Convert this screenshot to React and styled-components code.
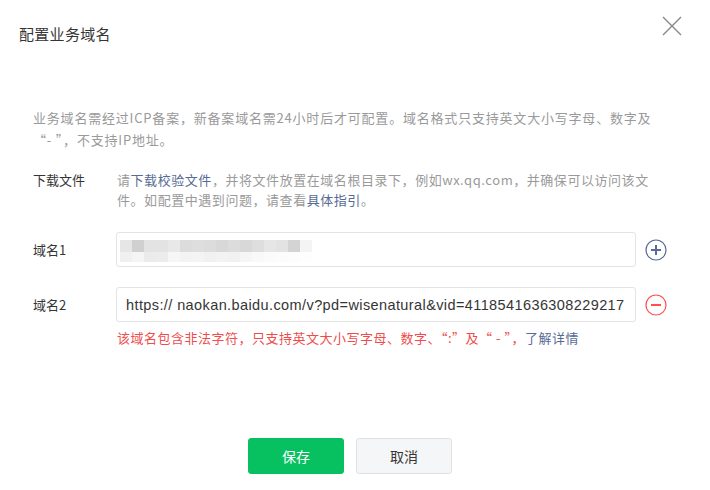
import React from "react";
import styled, { createGlobalStyle } from "styled-components";

const GlobalStyle = createGlobalStyle`
  html, body {
    margin: 0;
    padding: 0;
    background: #fff;
  }
  body {
    font-family: "Liberation Sans", "Noto Sans CJK SC", sans-serif;
    color: #353535;
  }
`;

const blurTop = ["#e6e6e6", "#d0d0d0", "#e3e3e3", "#e3e3e3", "#e8e8e8", "#dcdcdc", "#dedede", "#dcdcdc", "#d8d8d8", "#dcdcdc", "#d8d8d8", "#dedede", "#e6e6e6", "#e3e3e3", "#d4d4d4", "#f4f4f4"];
const blurBottom = ["#f0f0f0", "#f5f5f5", "#ebebeb", "#ececec", "#f6f6f6", "#f3f3f3", "#f4f4f4", "#f1f1f1", "#f3f3f3", "#f1f1f1", "#f6f6f6", "#f9f9f9", "#fbfbfb", "#fcfcfc", "#fdfdfd", "#fefefe"];

function App() {
    return (
        <Dialog>
            <GlobalStyle />
            <Header>
                <Title>配置业务域名</Title>
                <CloseButton aria-label="关闭">
                    <svg width="22" height="22" viewBox="0 0 22 22">
                        <path d="M2 2 L20 20 M20 2 L2 20" stroke="#888" strokeWidth="1.4" fill="none" />
                    </svg>
                </CloseButton>
            </Header>

            <Body>
                <Description>
                    业务域名需经过ICP备案，新备案域名需24小时后才可配置。域名格式只支持英文大小写字母、数字及<br />“- ”，不支持IP地址。
                </Description>

                <InfoRow>
                    <Label>下载文件</Label>
                    <InfoText>
                        请<Link>下载校验文件</Link>，并将文件放置在域名根目录下，例如wx.qq.com，并确保可以访问该文件。如配置中遇到问题，请查看<Link>具体指引</Link>。
                    </InfoText>
                </InfoRow>

                <FieldRow>
                    <Label>域名1</Label>
                    <InputBox>
                        <Blur>
                            <BlurLine>
                                {blurTop.map((c, i) => <BlurCell key={i} style={{ background: c }} />)}
                            </BlurLine>
                            <BlurLine $short>
                                {blurBottom.map((c, i) => <BlurCell key={i} style={{ background: c }} />)}
                            </BlurLine>
                        </Blur>
                    </InputBox>
                    <RoundIcon>
                        <svg width="22" height="22" viewBox="0 0 22 22">
                            <circle cx="11" cy="11" r="10" stroke="#576b95" strokeWidth="1.2" fill="none" />
                            <path d="M11 6 V16 M6 11 H16" stroke="#576b95" strokeWidth="2" />
                        </svg>
                    </RoundIcon>
                </FieldRow>

                <FieldRow $gap="20px">
                    <Label>域名2</Label>
                    <InputBox>
                        <InputText>https:// naokan.baidu.com/v?pd=wisenatural&amp;vid=4118541636308229217</InputText>
                    </InputBox>
                    <RoundIcon>
                        <svg width="22" height="22" viewBox="0 0 22 22">
                            <circle cx="11" cy="11" r="10" stroke="#fa5151" strokeWidth="1.2" fill="none" />
                            <path d="M6 11 H16" stroke="#fa5151" strokeWidth="2" />
                        </svg>
                    </RoundIcon>
                </FieldRow>
                <ErrorText>
                    该域名包含非法字符，只支持英文大小写字母、数字、“:”及“ - ”，<Link>了解详情</Link>
                </ErrorText>
            </Body>

            <Footer>
                <Button $primary>保存</Button>
                <Button>取消</Button>
            </Footer>
        </Dialog>
    );
}

export default App;

const Dialog = styled.div`
    width: 710px;
    height: 490px;
    background: #fff;
    position: relative;
    overflow: hidden;
`;

const Header = styled.div`
    display: flex;
    align-items: center;
    justify-content: space-between;
    height: 66px;
    padding: 0 27px 0 19px;
    box-sizing: border-box;
`;

const Title = styled.div`
    font-family: "Noto Sans CJK SC", sans-serif;
    font-size: 15px;
    color: #353535;
    line-height: 22px;
    letter-spacing: 0.3px;
    margin-top: 1px;
`;

const CloseButton = styled.button`
    border: none;
    background: transparent;
    padding: 0;
    width: 22px;
    height: 22px;
    margin-top: -14px;
    cursor: pointer;
    display: flex;
`;

const Body = styled.div`
    padding: 41px 0 0 33px;
`;

const Description = styled.div`
    width: 645px;
    font-family: "Noto Sans CJK SC", sans-serif;
    font-size: 13px;
    line-height: 22px;
    letter-spacing: 0.8px;
    color: #9a9a9a;
`;

const InfoRow = styled.div`
    display: flex;
    margin-top: 19px;
`;

const Label = styled.div`
    width: 84px;
    flex-shrink: 0;
    font-family: "Noto Sans CJK SC", sans-serif;
    font-size: 13px;
    line-height: 20px;
    color: #353535;
`;

const InfoText = styled.div`
    width: 545px;
    font-family: "Noto Sans CJK SC", sans-serif;
    font-size: 13px;
    line-height: 20px;
    letter-spacing: 0.55px;
    color: #9a9a9a;
`;

const Link = styled.span`
    color: #576b95;
    cursor: pointer;
`;

const FieldRow = styled.div`
    display: flex;
    align-items: center;
    margin-top: ${(props) => props.$gap || "22px"};
`;

const InputBox = styled.div`
    width: 520px;
    height: 35px;
    margin-left: -1px;
    border: 1px solid #e3e3e3;
    border-radius: 3px;
    box-sizing: border-box;
    display: flex;
    align-items: center;
    overflow: hidden;
    position: relative;
`;

const InputText = styled.span`
    padding-left: 9px;
    font-size: 14.5px;
    letter-spacing: 0.4px;
    color: #353535;
    white-space: nowrap;
`;

const Blur = styled.div`
    position: absolute;
    left: 3px;
    top: 7px;
    display: flex;
    flex-direction: column;
    filter: blur(0.6px);
`;

const BlurLine = styled.div`
    display: flex;
    height: ${(props) => (props.$short ? "10px" : "12px")};
`;

const BlurCell = styled.div`
    width: 12px;
    height: 100%;
`;

const RoundIcon = styled.div`
    margin-left: 9px;
    width: 22px;
    height: 22px;
    display: flex;
`;

const ErrorText = styled.div`
    margin: 6px 0 0 84px;
    font-family: "Noto Sans CJK SC", sans-serif;
    font-size: 13px;
    line-height: 20px;
    letter-spacing: 0.5px;
    color: #ef4d4d;
`;

const Footer = styled.div`
    position: absolute;
    left: 0;
    right: 10px;
    top: 438px;
    display: flex;
    justify-content: center;
    gap: 12px;
`;

const Button = styled.button`
    width: 96px;
    height: 36px;
    border-radius: 3px;
    box-sizing: border-box;
    font-family: "Noto Sans CJK SC", sans-serif;
    font-size: 14px;
    cursor: pointer;
    border: 1px solid ${(props) => (props.$primary ? "#07c160" : "#e0e2e4")};
    background: ${(props) => (props.$primary ? "#07c160" : "#f5f6f7")};
    color: ${(props) => (props.$primary ? "#fff" : "#353535")};
`;
